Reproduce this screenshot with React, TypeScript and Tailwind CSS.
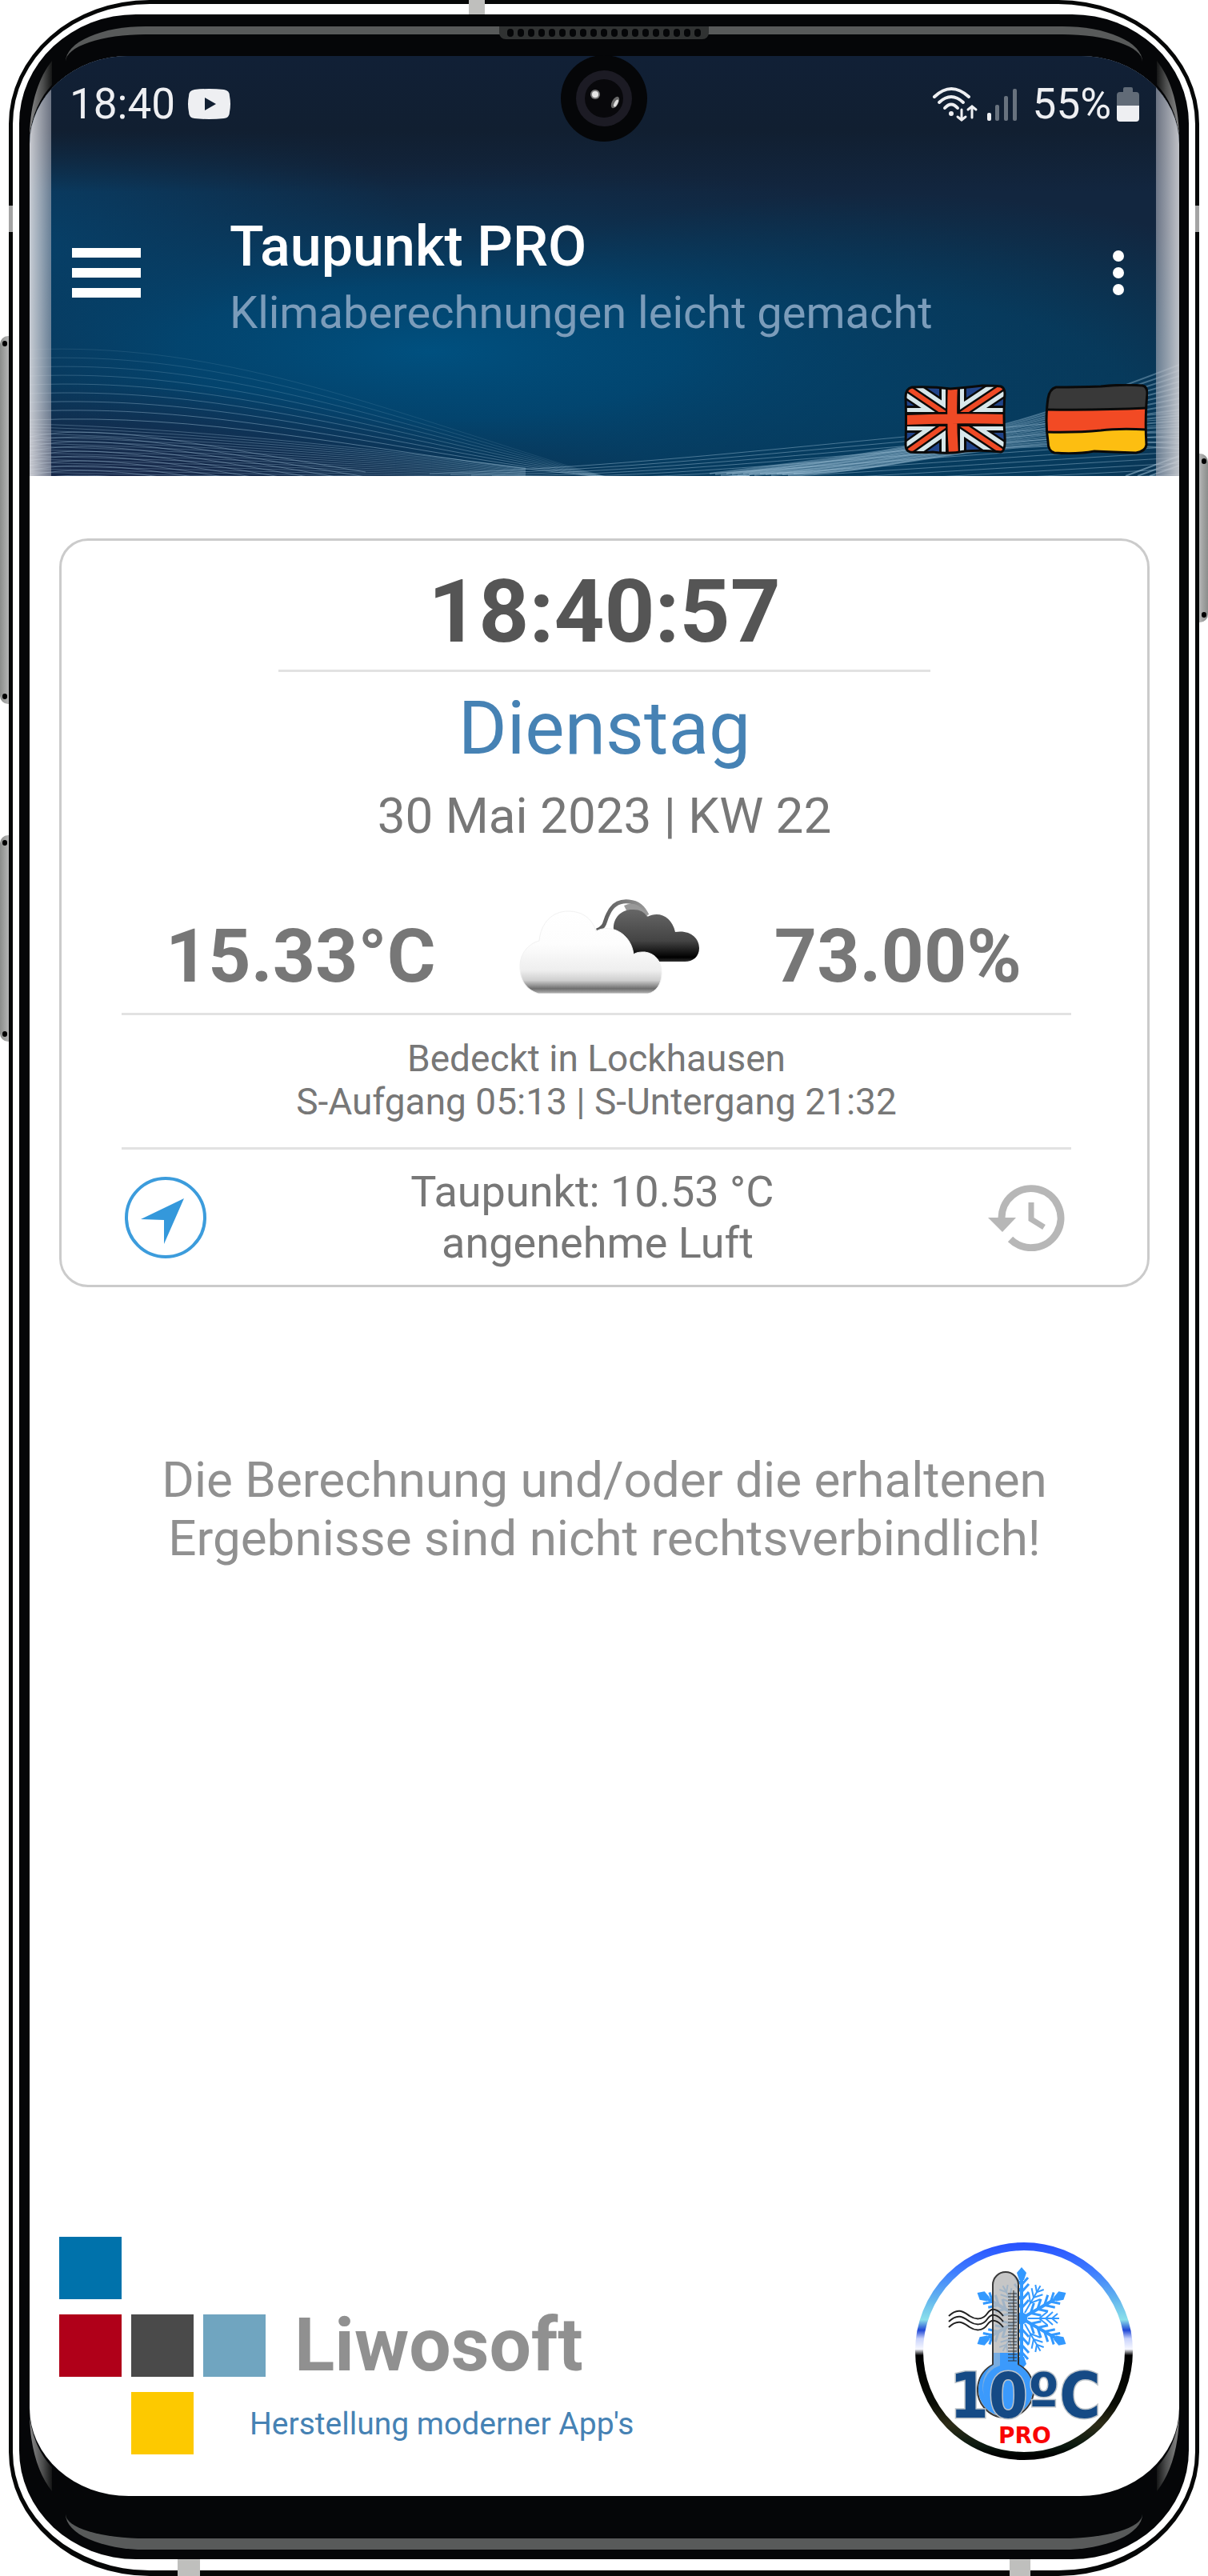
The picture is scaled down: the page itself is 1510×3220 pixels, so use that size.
const thinWaves = Array.from({ length: 9 }, (_, i) => {
  const y = 364 + i * 11
  return `M0 ${y + 3} C220 ${y - 6} 400 ${y + 62 - i * 3} 640 ${502 + i * 2} S820 522 900 525`
})

const denseWaves = Array.from({ length: 16 }, (_, i) => {
  const y = 460 + i * 4
  return `M0 ${y} C160 ${y + 4} 360 ${y + 22 - i} 620 ${515 + i}`
})

const crossWaves = Array.from({ length: 10 }, (_, i) => {
  const y = 468 + i * 6
  return `M0 ${y + 8} C90 ${y - 10} 200 ${y + 16} 420 ${y + 52}`
})

const risingWaves = Array.from({ length: 13 }, (_, i) => (
  `M${500 + i * 26} ${522 + i} C800 ${512 + i * 4} 1020 ${478 + i * 6} 1437 ${446 + i * 7}`
))

const bandWaves = Array.from({ length: 16 }, (_, i) => (
  `M${850 + i * 7} ${522 + (i % 3)} C1090 ${492 + i * 2} 1180 ${486 - i} 1437 ${386 + i * 7}`
))

const HeaderBackdrop = () => (
  <svg className="absolute inset-0 h-full w-full" viewBox="0 0 1437 525" preserveAspectRatio="none" aria-hidden="true">
    <defs>
      <radialGradient id="glow">
        <stop offset="0" stopColor="#00507f" />
        <stop offset="0.35" stopColor="#014874" stopOpacity="0.85" />
        <stop offset="1" stopColor="#0b3354" stopOpacity="0" />
      </radialGradient>
      <radialGradient id="glowLeft">
        <stop offset="0" stopColor="#06426c" />
        <stop offset="1" stopColor="#06426c" stopOpacity="0" />
      </radialGradient>
      <radialGradient id="glowRight">
        <stop offset="0" stopColor="#043f63" />
        <stop offset="0.5" stopColor="#043f63" stopOpacity="0.8" />
        <stop offset="1" stopColor="#043f63" stopOpacity="0" />
      </radialGradient>
      <radialGradient id="shade">
        <stop offset="0" stopColor="#18284a" />
        <stop offset="1" stopColor="#18284a" stopOpacity="0" />
      </radialGradient>
      <linearGradient id="top" x1="0" y1="0" x2="0" y2="1">
        <stop offset="0" stopColor="#112036" />
        <stop offset="0.55" stopColor="#111f31" />
        <stop offset="1" stopColor="#111f31" stopOpacity="0" />
      </linearGradient>
    </defs>
    <rect width="1437" height="525" fill="#12263f" />
    <ellipse cx="0" cy="240" rx="480" ry="230" fill="url(#glowLeft)" />
    <ellipse cx="1060" cy="440" rx="640" ry="270" fill="url(#glowRight)" />
    <ellipse cx="500" cy="370" rx="900" ry="240" fill="url(#glow)" />
    <ellipse cx="120" cy="530" rx="460" ry="120" fill="url(#shade)" />
    <rect width="1437" height="170" fill="url(#top)" />
    <g fill="none" stroke="#a9cbe0">
      {thinWaves.map((d, i) => <path key={i} d={d} opacity={0.12 + i * 0.04} />)}
      {denseWaves.map((d, i) => <path key={i} d={d} opacity="0.32" />)}
      {crossWaves.map((d, i) => <path key={i} d={d} opacity="0.4" />)}
      {risingWaves.map((d, i) => <path key={i} d={d} opacity="0.42" />)}
      {bandWaves.map((d, i) => <path key={i} d={d} strokeWidth="2" opacity="0.38" />)}
      <path d="M1370 525 L1437 500 M1385 525 L1437 506 M1400 525 L1437 512" strokeWidth="2" opacity="0.5" />
    </g>
  </svg>
)

const YoutubeIcon = () => (
  <svg className="h-[38px] w-[53px]" viewBox="0 0 53 38" aria-hidden="true">
    <path d="M8 1 Q26 -1 45 1 Q52 2 52 9 Q54 19 52 29 Q52 36 45 37 Q26 39 8 37 Q1 36 1 29 Q-1 19 1 9 Q1 2 8 1Z" fill="#eeeff2" />
    <path d="M21 11 L35 19 L21 27Z" fill="#111f32" />
  </svg>
)

const SignalIcons = () => (
  <svg className="h-[44px] w-[106px]" viewBox="0 0 106 44" aria-hidden="true">
    <g fill="none" stroke="#eeeff2" strokeWidth="4" strokeLinecap="round">
      <path d="M3 13 Q24 -7 46 13" />
      <path d="M9 20 Q24 6 39 20" />
      <path d="M16 27 Q24 18 32 27" />
      <path d="M37 29 V42 M32 38 L37 42 L42 38 M50 39 V25 M45 29 L50 25 L55 29" strokeWidth="3" />
    </g>
    <circle cx="24" cy="34" r="3" fill="#eeeff2" />
    <rect x="69" y="33" width="5" height="10" rx="2" fill="#eeeff2" />
    <g fill="#68727e">
      <rect x="79" y="23" width="5" height="20" rx="2" />
      <rect x="90" y="12" width="5" height="31" rx="2" />
      <rect x="101" y="3" width="5" height="40" rx="2" />
    </g>
  </svg>
)

const BatteryIcon = () => (
  <svg className="h-[44px] w-[28px]" viewBox="0 0 28 44" aria-hidden="true">
    <path d="M8 3 Q8 1 10 1 H18 Q20 1 20 3 V7 H24 Q28 7 28 11 V24 H0 V11 Q0 7 4 7 H8Z" fill="#616b77" />
    <path d="M0 24 H28 V40 Q28 44 24 44 H4 Q0 44 0 40Z" fill="#eeeff2" />
  </svg>
)

const UkFlag = () => (
  <svg className="h-[88px] w-[128px]" viewBox="0 0 128 88" aria-hidden="true">
    <defs>
      <clipPath id="uk">
        <path d="M10 4 Q36 3 58 6 Q82 4 98 2 Q112 2 121 3 Q126 5 126 12 Q124 40 126 66 Q127 84 121 85 Q100 82 76 84 Q56 88 36 85 Q20 86 8 85 Q2 84 2 76 Q3 46 2 16 Q2 6 10 4Z" />
      </clipPath>
    </defs>
    <g clipPath="url(#uk)">
      <rect width="128" height="88" fill="#214489" />
      <g stroke="#0a0a0a" strokeWidth="27">
        <path d="M0 2 L62 44 L128 88 M128 0 L62 44 L0 88" />
        <path d="M61 0 V88 M0 44 H128" strokeWidth="34" />
      </g>
      <g stroke="#d8e7ea" strokeWidth="22">
        <path d="M0 2 L62 44 L128 88 M128 0 L62 44 L0 88" />
        <path d="M61 0 V88 M0 44 H128" strokeWidth="28" />
      </g>
      <path d="M0 2 L62 44 L128 88 M128 0 L62 44 L0 88" stroke="#0a0a0a" strokeWidth="11" />
      <path d="M0 2 L62 44 L128 88 M128 0 L62 44 L0 88" stroke="#ef4a25" strokeWidth="6" />
      <path d="M61 0 V88 M0 44 H128" stroke="#0a0a0a" strokeWidth="18" />
      <path d="M61 0 Q59 44 62 88 M0 45 Q64 42 128 44" fill="none" stroke="#ef4a25" strokeWidth="12" />
    </g>
    <path d="M10 4 Q36 3 58 6 Q82 4 98 2 Q112 2 121 3 Q126 5 126 12 Q124 40 126 66 Q127 84 121 85 Q100 82 76 84 Q56 88 36 85 Q20 86 8 85 Q2 84 2 76 Q3 46 2 16 Q2 6 10 4Z" fill="none" stroke="#0a0a0a" strokeWidth="3" />
  </svg>
)

const GermanFlag = () => (
  <svg className="h-[88px] w-[129px]" viewBox="0 0 129 88" aria-hidden="true">
    <defs>
      <clipPath id="de">
        <path d="M14 4 Q40 4 70 3 Q98 0 122 2 Q128 3 128 12 Q125 44 127 76 Q126 84 114 86 Q84 85 62 84 Q40 88 12 86 Q4 84 4 72 Q0 46 4 18 Q6 6 14 4Z" />
      </clipPath>
    </defs>
    <g clipPath="url(#de)">
      <rect width="129" height="88" fill="#393939" />
      <path d="M0 32 Q70 33 129 30 V88 H0Z" fill="#f24a24" stroke="#0a0a0a" strokeWidth="3" />
      <path d="M0 60 Q40 61 70 58 Q92 55 129 57 V92 H0Z" fill="#fdbe11" stroke="#0a0a0a" strokeWidth="3" />
    </g>
    <path d="M14 4 Q40 4 70 3 Q98 0 122 2 Q128 3 128 12 Q125 44 127 76 Q126 84 114 86 Q84 85 62 84 Q40 88 12 86 Q4 84 4 72 Q0 46 4 18 Q6 6 14 4Z" fill="none" stroke="#0a0a0a" strokeWidth="3" />
  </svg>
)

const CloudIcon = () => (
  <svg className="h-[126px] w-[240px]" viewBox="0 0 240 126" aria-label="Bedeckt" role="img">
    <defs>
      <linearGradient id="lightCloud" x1="0" y1="0" x2="0" y2="1">
        <stop offset="0" stopColor="#fff" />
        <stop offset="0.4" stopColor="#fdfdfd" />
        <stop offset="0.72" stopColor="#eee" />
        <stop offset="0.84" stopColor="#cfcfcf" />
        <stop offset="0.94" stopColor="#6e6e6e" />
        <stop offset="1" stopColor="#b5b5b5" />
      </linearGradient>
      <linearGradient id="darkCloud" x1="0" y1="0" x2="0" y2="1">
        <stop offset="0" stopColor="#666" />
        <stop offset="0.6" stopColor="#444" />
        <stop offset="0.92" stopColor="#000" />
        <stop offset="1" stopColor="#333" />
      </linearGradient>
      <linearGradient id="rim" x1="0" y1="0" x2="1" y2="0">
        <stop offset="0" stopColor="#555" />
        <stop offset="1" stopColor="#999" />
      </linearGradient>
    </defs>
    <path d="M110 43 C122 38 119 32 124 23 C130 9 140 6 150 7 C162 8 168 14 173 24" fill="none" stroke="url(#rim)" strokeWidth="5" />
    <path d="M144 12 Q162 4 174 26 L150 24Z" fill="#999" />
    <path d="M131 42 C130 26 142 16 156 17 Q168 17 173 26 C188 18 204 26 208 45 C226 42 238 52 238 65 C238 76 230 82 220 82 L186 82 C180 74 172 72 164 72 L156 74 C154 58 146 48 131 42Z" fill="url(#darkCloud)" />
    <path d="M37 122 C20 116 14 104 14 88 C14 72 24 60 38 56 C40 34 54 19 74 19 C92 19 104 28 109 44 C114 41 120 40 127 41 C142 43 154 56 156 73 C160 70 165 70 170 70 C184 72 191 82 191 97 C191 110 184 120 174 122Z" fill="url(#lightCloud)" stroke="#f1f1f1" strokeWidth="1" />
  </svg>
)

const CompassIcon = () => (
  <svg className="h-[104px] w-[104px]" viewBox="0 0 104 104" aria-hidden="true">
    <circle cx="52" cy="52" r="49" fill="none" stroke="#3c9cdc" strokeWidth="4" />
    <path d="M75 28 L21 54 L50 55 L50 85Z" fill="#3498db" />
  </svg>
)

const HistoryIcon = () => (
  <svg className="h-[84px] w-[96px]" viewBox="0 0 96 84" aria-hidden="true">
    <path d="M17 44 A37 37 0 1 1 28 69" fill="none" stroke="#b7b7b7" strokeWidth="9" />
    <path d="M0 42 H35 L18 60Z" fill="#b7b7b7" />
    <path d="M54 23 V44 L70 54" fill="none" stroke="#b7b7b7" strokeWidth="7" />
  </svg>
)

const BadgeLogo = () => (
  <svg className="h-[273px] w-[273px] shrink-0" viewBox="0 0 273 273" role="img" aria-label="10ºC PRO">
    <defs>
      <linearGradient id="ring" x1="0" y1="0" x2="0" y2="1">
        <stop offset="0" stopColor="#2a55ff" />
        <stop offset="0.12" stopColor="#3f7dff" />
        <stop offset="0.25" stopColor="#62b4ee" />
        <stop offset="0.35" stopColor="#8be0ea" />
        <stop offset="0.4" stopColor="#2148d6" />
        <stop offset="0.44" stopColor="#c9d3fb" />
        <stop offset="0.49" stopColor="#f6f7ff" />
        <stop offset="0.52" stopColor="#000" />
        <stop offset="0.75" stopColor="#0a0d05" />
        <stop offset="0.85" stopColor="#2d2c17" />
        <stop offset="0.95" stopColor="#0b1a10" />
        <stop offset="1" stopColor="#000" />
      </linearGradient>
    </defs>
    <circle cx="136" cy="136" r="131" fill="#fff" stroke="url(#ring)" strokeWidth="10" />
    <g transform="translate(133 95)" fill="none" stroke="#3399ff">
      {[0, 60, 120, 180, 240, 300].map((a) => (
        <g key={a} transform={`rotate(${a})`}>
          <path d="M0 0 V-56" strokeWidth="4" />
          <path d="M-9 -23 L0 -13 L9 -23 M-9 -33 L0 -23 L9 -33 M-9 -43 L0 -33 L9 -43 M-8 -51 L0 -42 L8 -51" strokeWidth="3" />
          <path d="M0 -64 L6 -57 L3 -48 H-3 L-6 -57Z" fill="#3399ff" stroke="none" />
        </g>
      ))}
      {[30, 90, 150, 210, 330].map((a) => (
        <g key={a} transform={`rotate(${a})`} strokeWidth="2">
          <path d="M0 -8 V-47" />
          <path d="M-8 -32 L0 -22 L8 -32 M-8 -39 L0 -30 L8 -39 M-6 -45 L0 -38 L6 -45" />
        </g>
      ))}
      <circle r="7" fill="#3399ff" />
    </g>
    <path d="M97 53 A16 16 0 0 1 129 53 V153 A35 35 0 1 1 97 153Z" fill="#b9b9b9" fillOpacity="0.82" stroke="#3a3a3a" strokeWidth="2" />
    <path d="M98 138 H128 V153 A34 34 0 1 1 98 153Z" fill="#3b9afc" />
    <path d="M98 138 H106 V154 A30 30 0 0 0 88 196 A34 34 0 0 1 98 153Z" fill="#78ace0" />
    <path d="M123 60 V148 M129 54 V152" stroke="#222" strokeWidth="1" />
    {Array.from({ length: 22 }, (_, i) => (
      <path key={i} d={`M116 ${64 + i * 4} H127`} stroke="#333" strokeWidth="1" />
    ))}
    <g fill="none" stroke="#222" strokeWidth="2">
      <path d="M42 92 C54 80 62 88 68 92 S84 98 90 89 S104 84 110 92" />
      <path d="M42 99 C54 87 62 95 68 99 S84 105 90 96 S104 91 110 99" />
      <path d="M42 106 C54 94 62 102 68 106 S84 112 90 103 S104 98 110 106" />
    </g>
    <text fontWeight="700" className="font-['DejaVu_Sans_Condensed','DejaVu_Sans',sans-serif]">
      <tspan x="43" y="219" fontSize="78" fill="#154a85" stroke="#bcc3c9" strokeWidth="3" paintOrder="stroke">10ºC</tspan>
      <tspan x="104" y="251" fontSize="28" fill="#f90505" className="font-['DejaVu_Sans',sans-serif]">PRO</tspan>
    </text>
  </svg>
)

// Light reflection on the curved glass, drawn for the top left corner
const Glint = ({ className }: { className: string }) => (
  <svg className={`absolute h-[98px] w-[28px] ${className}`} viewBox="0 0 28 98" aria-hidden="true">
    <defs>
      <linearGradient id="glint" x1="0" y1="0" x2="1" y2="0">
        <stop offset="0" stopColor="#8a8a8a" />
        <stop offset="0.6" stopColor="#4c4d4d" />
        <stop offset="1" stopColor="#151616" />
      </linearGradient>
    </defs>
    <path d="M28 4 C12 24 1 55 0 98 C3 72 13 50 28 34Z" fill="url(#glint)" />
  </svg>
)

const SideKey = ({ className }: { className: string }) => (
  <div className={`absolute flex w-[11px] flex-col items-center justify-between py-[6px] from-[#8b8d8b] to-[#b5b5b5] ${className}`}>
    <span className="h-[7px] w-[6px] rounded-full bg-black" />
    <span className="h-[7px] w-[6px] rounded-full bg-black" />
  </div>
)

const Header = () => (
  <header className="relative">
    <HeaderBackdrop />
    <div className="absolute inset-y-0 left-0 w-[27px] bg-linear-to-r from-[#dcdce0]/90 to-[#a9acb8]/60" />
    <div className="absolute inset-y-0 right-0 w-[29px] bg-linear-to-l from-[#d2d2d6]/90 to-[#a9acb8]/60" />

    <div className="relative flex items-center justify-between pt-[30px] pr-[50px] pl-[50px] text-[53px] leading-[60px] text-[#eeeff2]">
      <div className="flex items-center gap-[16px]">
        <span>18:40</span>
        <YoutubeIcon />
      </div>
      <div className="flex items-center">
        <SignalIcons />
        <span className="ml-[20px]">55%</span>
        <span className="ml-[7px]"><BatteryIcon /></span>
      </div>
    </div>

    <div className="relative mt-[108px] flex items-start pr-[60px] pl-[53px]">
      <button aria-label="Menü" className="flex h-[146px] w-[86px] flex-col justify-center gap-[13px]">
        <span className="h-[12px] w-full bg-white" />
        <span className="h-[12px] w-full bg-white" />
        <span className="h-[12px] w-full bg-white" />
      </button>
      <div className="ml-[111px] flex-1">
        <h1 className="text-[70px] leading-[80px] font-medium text-white">Taupunkt PRO</h1>
        <p className="mt-[4px] text-[56px] leading-[78px] text-[#7b9cba]">Klimaberechnungen leicht gemacht</p>
      </div>
      <button aria-label="Mehr" className="flex h-[146px] w-[32px] flex-col items-center justify-center gap-[7px]">
        <span className="size-[14px] rounded-full bg-white" />
        <span className="size-[14px] rounded-full bg-white" />
        <span className="size-[14px] rounded-full bg-white" />
      </button>
    </div>

    <div className="relative mt-[50px] flex justify-end gap-[48px] pr-[39px] pb-[27px]">
      <button aria-label="English"><UkFlag /></button>
      <button aria-label="Deutsch"><GermanFlag /></button>
    </div>
  </header>
)

const WeatherCard = () => (
  <section className="mx-[37px] mt-[78px] rounded-[36px] border-[3px] border-[#cbcbcb] pt-[29px] pb-[20px] text-center text-[#777777]">
    <div className="text-[110px] leading-[120px] font-bold text-[#555555]">18:40:57</div>
    <hr className="mx-auto mt-[12px] w-3/5 border-t-[3px] border-[#e2e2e2]" />
    <div className="mt-[21px] text-[93px] leading-[100px] text-[#4682b4]">Dienstag</div>
    <div className="mt-[22px] text-[62px] leading-[73px]">30 Mai 2023 | KW 22</div>

    <div className="mt-[64px] flex items-end justify-between pr-[157px] pl-[130px] text-[93px] leading-[100px] font-bold">
      <span>15.33°C</span>
      <CloudIcon />
      <span>73.00%</span>
    </div>

    <div className="pr-[95px] pl-[75px]">
      <hr className="mt-[20px] border-t-[3px] border-[#e2e2e2]" />
      <p className="mt-[27px] text-[46px] leading-[54px]">
        Bedeckt in Lockhausen<br />
        S-Aufgang 05:13 | S-Untergang 21:32
      </p>
      <hr className="mt-[30px] border-t-[3px] border-[#e2e2e2]" />
      <div className="mt-[21px] flex items-center justify-between pr-[8px] pl-[3px]">
        <button aria-label="Standort"><CompassIcon /></button>
        <p className="text-[54px] leading-[64px]">
          Taupunkt: 10.53 °C&nbsp;<br />
          angenehme Luft
        </p>
        <button aria-label="Verlauf"><HistoryIcon /></button>
      </div>
    </div>
  </section>
)

const Footer = () => (
  <footer className="mt-auto flex items-end justify-between pr-[57px] pb-[44px] pl-[37px]">
    <div className="flex flex-col gap-[19px] pb-[8px]">
      <div className="size-[78px] bg-[#0072ab]" />
      <div className="flex items-center gap-[12px]">
        <div className="size-[78px] bg-[#b00019]" />
        <div className="size-[78px] bg-[#4a4a4a]" />
        <div className="size-[78px] bg-[#70a5c0]" />
        <div className="ml-[24px] text-[93px] leading-[78px] font-bold text-[#909090]">Liwosoft</div>
      </div>
      <div className="flex items-center pl-[90px]">
        <div className="size-[78px] bg-[#fdc900]" />
        <div className="ml-[70px] pt-[2px] text-[39px] leading-[54px] text-[#4682b4]">Herstellung moderner App's</div>
      </div>
    </div>
    <BadgeLogo />
  </footer>
)

const App = () => {
  return (
    <div className="flex min-h-screen bg-white px-[11px] font-['Roboto',sans-serif]">
      <div className="relative flex flex-1 rounded-[176px/155px] border-[5px] border-b-[7px] border-[#060707] bg-white px-[8px] pt-[13px] pb-[14px]">
        <SideKey className="top-[415px] left-[-16px] h-[460px] rounded-l-[10px] bg-linear-to-r" />
        <SideKey className="top-[1039px] left-[-16px] h-[258px] rounded-l-[10px] bg-linear-to-r" />
        <SideKey className="top-[562px] right-[-16px] h-[211px] rounded-r-[10px] bg-linear-to-l" />
        {/* Antenna bands */}
        <div className="absolute top-[-5px] left-[570px] h-[23px] w-[20px] bg-[#bfbfbd]" />
        <div className="absolute top-[252px] left-[-5px] h-[33px] w-[5px] bg-[#a3a3a3]" />
        <div className="absolute top-[252px] right-[-5px] h-[33px] w-[5px] bg-[#a3a3a3]" />
        <div className="absolute bottom-[-7px] left-[206px] h-[21px] w-[28px] bg-[#bfbfbd]" />
        <div className="absolute right-[206px] bottom-[-7px] h-[21px] w-[26px] bg-[#bfbfbd]" />

        <div className="relative flex flex-1 rounded-[146px/136px] bg-[#050608] pt-[52px] pr-[12px] pb-[79px] pl-[13px]">
          <div className="absolute inset-x-[58px] top-[15px] bottom-[12px] rounded-[100px/44px] border-t-[10px] border-b-[14px] border-[#585a5a]" />
          {/* Speaker */}
          <div className="absolute top-[15px] left-1/2 flex h-[16px] w-[262px] -translate-x-1/2 items-center justify-center gap-[5px] rounded-b-[8px] bg-[#303232]">
            {[...Array(19)].map((_, i) => (
              <span key={i} className="h-[10px] w-[8px] rounded-full bg-[#050608]" />
            ))}
          </div>

          <main className="relative flex flex-1 flex-col overflow-hidden rounded-[124px/110px] bg-white">
            <Header />
            <WeatherCard />
            <p className="mt-[204px] text-center text-[62px] leading-[73px] text-[#909090]">
              Die Berechnung und/oder die erhaltenen<br />
              Ergebnisse sind nicht rechtsverbindlich!
            </p>
            <Footer />
          </main>

          <Glint className="top-[54px] left-[13px]" />
          <Glint className="top-[54px] right-[12px] -scale-x-100" />
          <Glint className="bottom-[81px] left-[13px] -scale-y-100" />
          <Glint className="right-[12px] bottom-[81px] -scale-100" />

          {/* Camera */}
          <svg className="absolute top-[51px] left-1/2 h-[108px] w-[108px] -translate-x-1/2" viewBox="0 0 108 108" aria-hidden="true">
            <circle cx="54" cy="54" r="54" fill="#050608" />
            <circle cx="54" cy="54" r="35" fill="#1c1b24" />
            <circle cx="54" cy="54" r="24" fill="#08080b" />
            <circle cx="43" cy="49" r="6" fill="#777" />
            <circle cx="43" cy="49" r="4" fill="#e5e5e5" />
            <ellipse cx="68" cy="59" rx="4" ry="8" transform="rotate(28 68 59)" fill="#666" />
            <ellipse cx="69" cy="60" rx="2" ry="5" transform="rotate(28 69 60)" fill="#ddd" />
          </svg>
        </div>
      </div>
    </div>
  )
}

export default App
